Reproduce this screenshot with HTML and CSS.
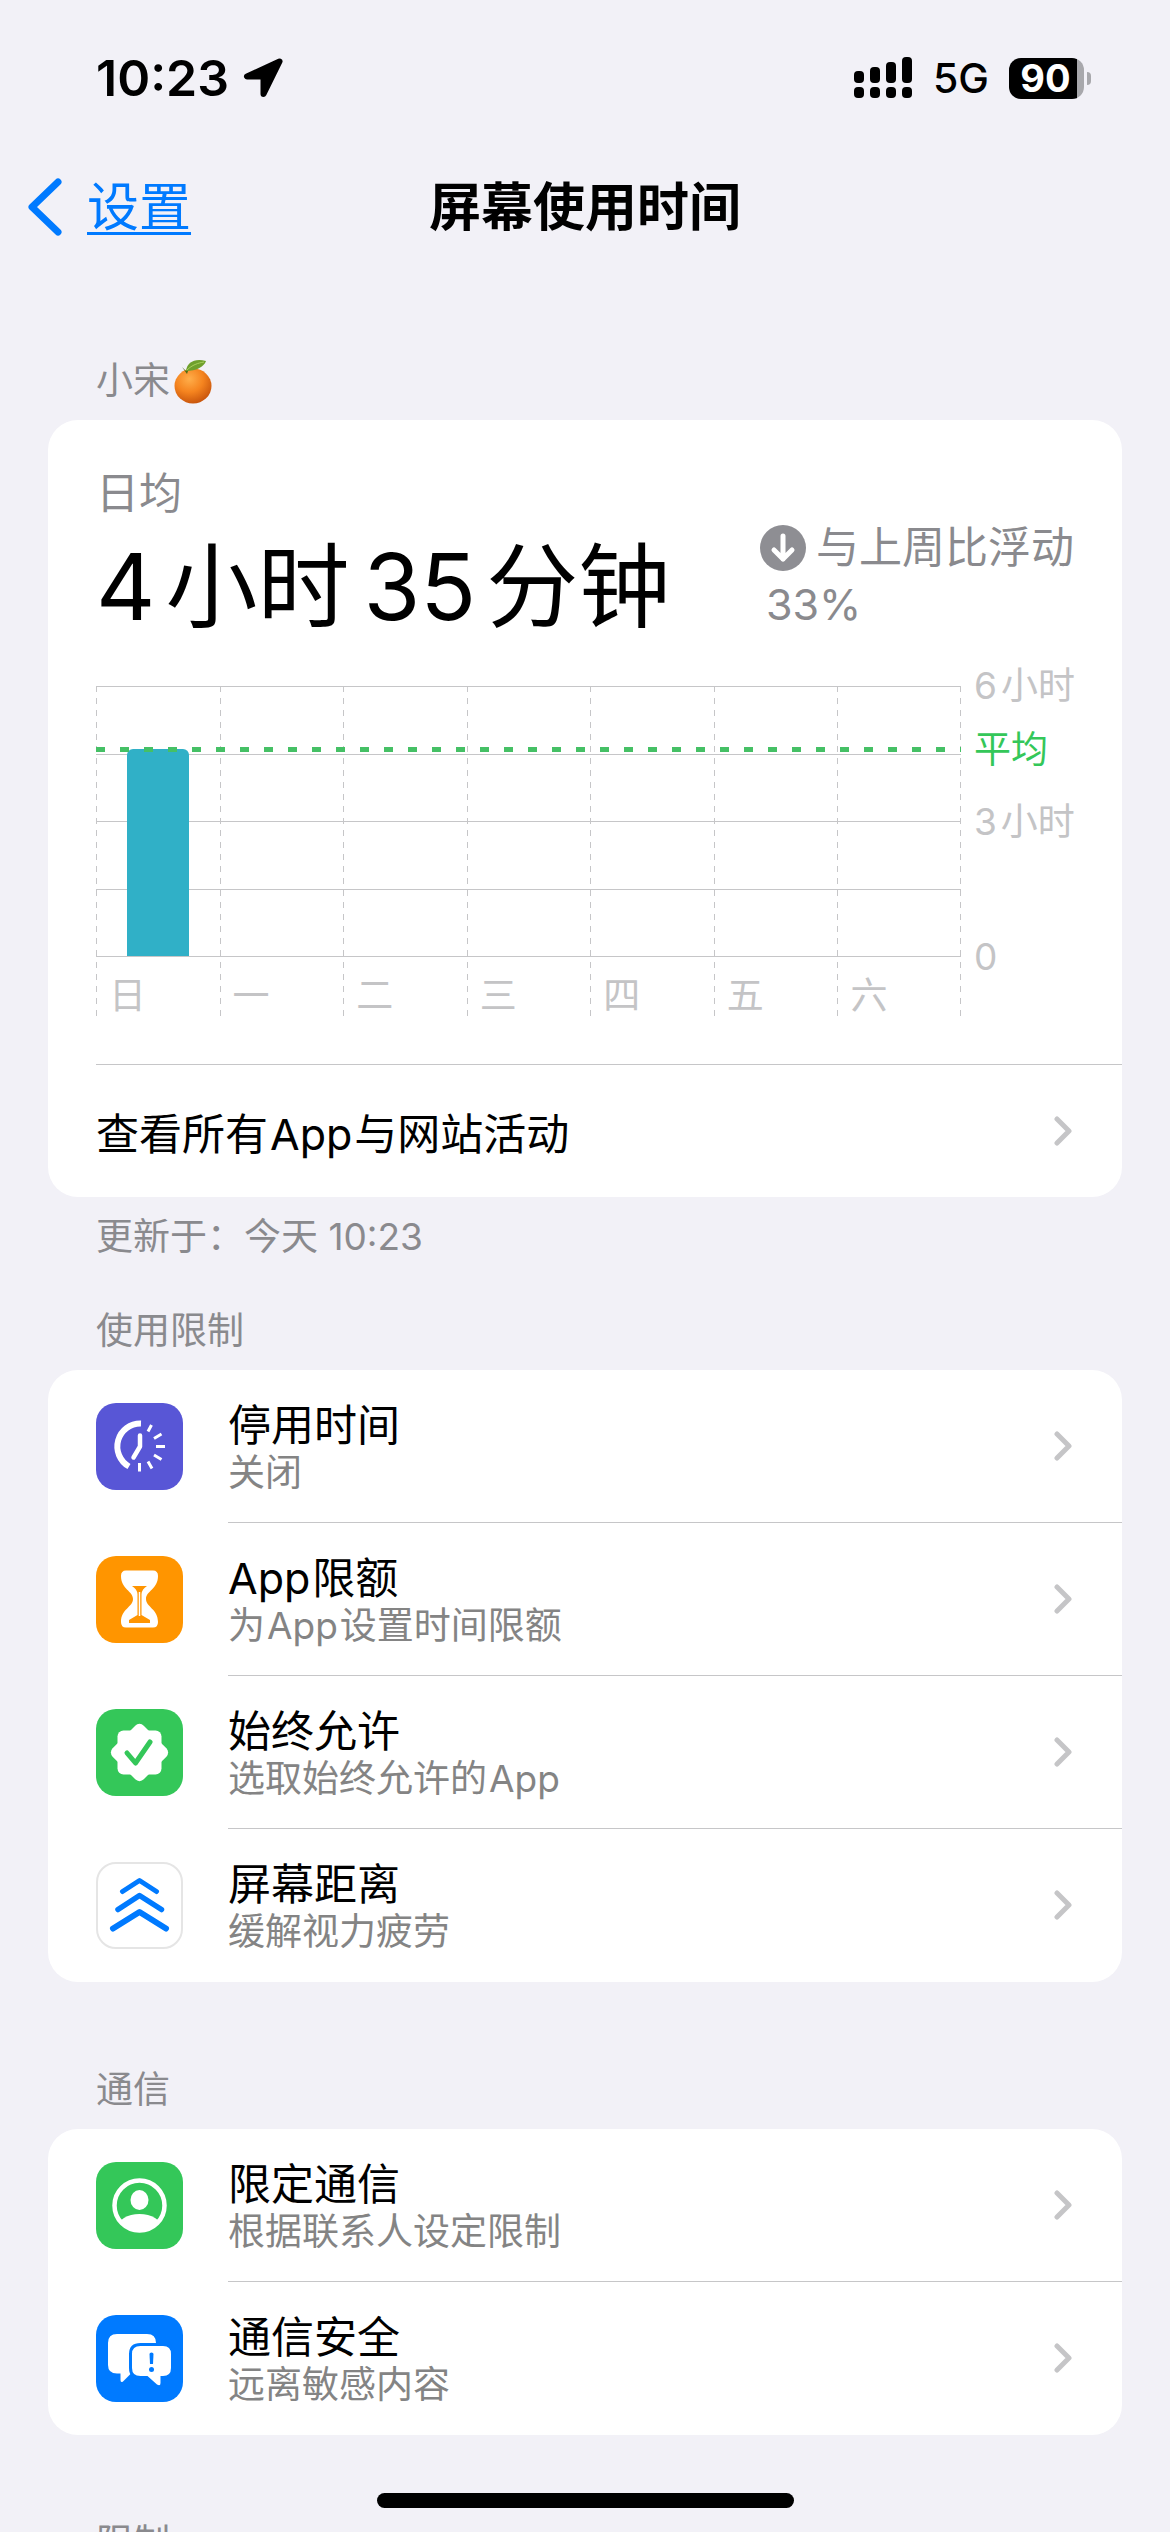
FILE: index.html
```html
<!DOCTYPE html>
<html lang="zh-CN">
<head>
<meta charset="utf-8">
<meta name="viewport" content="width=device-width">
<title>屏幕使用时间</title>
<link rel="stylesheet" href="styles.css">
</head>
<body>
<svg class="defs" aria-hidden="true">
  <symbol id="chevron" viewBox="0 0 20 30">
    <path d="M4 3 L16 15 L4 27" fill="none" stroke="currentColor" stroke-width="5" stroke-linecap="round" stroke-linejoin="round"/>
  </symbol>
</svg>
<div class="screen">
  <div class="status">
    <div class="status-group">
      <span class="clock">10:23</span>
      <svg class="location" viewBox="0 0 40 40" aria-hidden="true">
        <path d="M36.500 3.500 L4 18.500 H20.500 V36 Z" fill="#000" stroke="#000" stroke-width="6" stroke-linejoin="round"/>
      </svg>
    </div>
    <div class="status-group status-right">
      <svg class="signal" viewBox="0 0 60 42" aria-hidden="true">
        <rect x="1" y="14" width="10" height="12" rx="4"/>
        <rect x="17" y="10" width="10" height="16" rx="4"/>
        <rect x="33" y="5" width="10" height="21" rx="4"/>
        <rect x="49" y="0" width="10" height="26" rx="4"/>
        <rect x="1" y="30" width="10" height="11" rx="4"/>
        <rect x="17" y="30" width="10" height="11" rx="4"/>
        <rect x="33" y="30" width="10" height="11" rx="4"/>
        <rect x="49" y="30" width="10" height="11" rx="4"/>
      </svg>
      <span class="network">5G</span>
      <span class="battery"><span class="battery-body">90</span><span class="battery-cap"></span></span>
    </div>
  </div>

  <header class="nav">
    <a class="back" href="#">
      <svg viewBox="0 0 34 58" aria-hidden="true"><path d="M30 4 L4 29 L30 54" fill="none" stroke="currentColor" stroke-width="7" stroke-linecap="round" stroke-linejoin="round"/></svg>
      <span class="back-text">设置</span>
    </a>
    <h1 class="nav-title">屏幕使用时间</h1>
  </header>

  <main class="content">
    <section>
      <h2 class="section-title">小宋
        <svg class="orange" viewBox="0 0 38 45" role="img" aria-label="橘子">
          <defs>
            <radialGradient id="peel" cx="0.400" cy="0.300" r="0.750">
              <stop offset="0" stop-color="#ffae4a"/><stop offset="0.500" stop-color="#f5841f"/><stop offset="1" stop-color="#c4500a"/>
            </radialGradient>
          </defs>
          <ellipse cx="19" cy="27" rx="18.500" ry="17.500" fill="url(#peel)"/>
          <path d="M8 8 l4 4 l3 -3 l-2 6 z" fill="#4c6b16"/>
          <path d="M12 12 C13 3 21 -1 32 2 C30 8 22 12 12 12 Z" fill="#6fa02c"/>
          <path d="M13 11 C18 6 24 4 30 3" fill="none" stroke="#a9cf5e" stroke-width="1"/>
        </svg>
      </h2>
      <div class="card">
        <div class="summary">
          <div>
            <div class="caption">日均</div>
            <div class="total">4<span class="unit">小时</span>35<span class="unit">分钟</span></div>
          </div>
          <div class="trend">
            <div class="trend-line">
              <svg class="down" viewBox="0 0 46 46" aria-hidden="true">
                <circle cx="23" cy="23" r="23" fill="#8e8e93"/>
                <path d="M23 11 V34 M14 25 L23 34 L32 25" fill="none" stroke="#fff" stroke-width="5" stroke-linecap="round" stroke-linejoin="round"/>
              </svg>
              <span>与上周比浮动</span>
            </div>
            <div class="trend-value">33%</div>
          </div>
        </div>

        <div class="chart">
          <div class="plot">
            <div class="rules"><i></i><i></i><i></i><i></i></div>
            <div class="days">
              <div class="day"><div class="slot"><div class="bar" style="height:76.5%"></div></div><span>日</span></div>
              <div class="day"><div class="slot"></div><span>一</span></div>
              <div class="day"><div class="slot"></div><span>二</span></div>
              <div class="day"><div class="slot"></div><span>三</span></div>
              <div class="day"><div class="slot"></div><span>四</span></div>
              <div class="day"><div class="slot"></div><span>五</span></div>
              <div class="day"><div class="slot"></div><span>六</span></div>
            </div>
            <div class="average" style="bottom:76.5%"></div>
          </div>
          <div class="axis">
            <span class="tick" style="bottom:100%">6<span class="unit-small">小时</span></span>
            <span class="tick tick-average" style="bottom:76.5%">平均</span>
            <span class="tick" style="bottom:50%">3<span class="unit-small">小时</span></span>
            <span class="tick" style="bottom:0%">0</span>
          </div>
        </div>

        <a class="all" href="#">
          <span>查看所有<span class="latin">App</span>与网站活动</span>
          <svg class="chevron" aria-hidden="true"><use href="#chevron"/></svg>
        </a>
      </div>
      <p class="note">更新于：今天 10:23</p>
    </section>

    <section>
      <h2 class="section-title section-title-near">使用限制</h2>
      <div class="card">
        <a class="row" href="#">
          <svg class="icon" viewBox="0 0 87 87" aria-hidden="true">
            <rect width="87" height="87" rx="20" fill="#5856d6"/>
            <g fill="none" stroke="#fff">
              <path d="M45 20.500 A23 23 0 0 0 33 63.500" stroke-width="6"/>
              <path d="M44 32.500 V43.500 L37.500 54.500" stroke-width="4.500" stroke-linecap="round" stroke-linejoin="round"/>
              <path d="M55.500 22 L52 28.500 M65.500 31 L58 35.500 M60 43.500 H69 M58 52 L65.500 56.500 M52 58.500 L56 65.500 M43.500 60 V68.500" stroke-width="3"/>
            </g>
          </svg>
          <span class="row-body"><span class="row-text"><span class="row-title">停用时间</span><span class="row-sub">关闭</span></span>
          <svg class="chevron" aria-hidden="true"><use href="#chevron"/></svg></span>
        </a>
        <a class="row" href="#">
          <svg class="icon" viewBox="0 0 87 87" aria-hidden="true">
            <rect width="87" height="87" rx="20" fill="#ff9500"/>
            <path d="M30 14.500 H57 Q62 14.500 62 20 C62 33 50 35 50 43 C50 51 62 53 62 66 Q62 71.500 57 71.500 H30 Q25 71.500 25 66 C25 53 37 51 37 43 C37 35 25 33 25 20 Q25 14.500 30 14.500 Z" fill="#fff"/>
            <path d="M36 30 H51 Q46 33 45.500 38 V59 L54 64 V67 H33 V64 L41.500 59 V38 Q41 33 36 30 Z" fill="#ff9500"/>
            <path d="M43.500 36 V60" stroke="#fff" stroke-width="1.500"/>
          </svg>
          <span class="row-body"><span class="row-text"><span class="row-title"><span class="latin-start">App</span>限额</span><span class="row-sub">为<span class="latin">App</span>设置时间限额</span></span>
          <svg class="chevron" aria-hidden="true"><use href="#chevron"/></svg></span>
        </a>
        <a class="row" href="#">
          <svg class="icon" viewBox="0 0 87 87" aria-hidden="true">
            <rect width="87" height="87" rx="20" fill="#34c759"/>
            <rect x="21.500" y="21.500" width="44" height="44" rx="6" fill="#fff"/>
            <rect x="21.500" y="21.500" width="44" height="44" rx="6" fill="#fff" transform="rotate(45 43.500 43.500)"/>
            <path d="M31 44 L39.500 54 L54 33" fill="none" stroke="#34c759" stroke-width="5" stroke-linecap="round" stroke-linejoin="round"/>
          </svg>
          <span class="row-body"><span class="row-text"><span class="row-title">始终允许</span><span class="row-sub">选取始终允许的<span class="latin-end">App</span></span></span>
          <svg class="chevron" aria-hidden="true"><use href="#chevron"/></svg></span>
        </a>
        <a class="row" href="#">
          <svg class="icon" viewBox="0 0 87 87" aria-hidden="true">
            <rect x="1" y="1" width="85" height="85" rx="19" fill="#fff" stroke="#e5e5e5" stroke-width="2"/>
            <g fill="none" stroke="#007aff" stroke-linecap="round" stroke-linejoin="round">
              <path d="M26.500 29.500 L43.500 18.500 L60.500 29.500" stroke-width="5"/>
              <path d="M22 47.500 L43.500 33.500 L65.500 47.500" stroke-width="5.500"/>
              <path d="M17 66.500 L43.500 50 L70 66.500" stroke-width="6"/>
            </g>
          </svg>
          <span class="row-body"><span class="row-text"><span class="row-title">屏幕距离</span><span class="row-sub">缓解视力疲劳</span></span>
          <svg class="chevron" aria-hidden="true"><use href="#chevron"/></svg></span>
        </a>
      </div>
    </section>

    <section>
      <h2 class="section-title">通信</h2>
      <div class="card">
        <a class="row" href="#">
          <svg class="icon" viewBox="0 0 87 87" aria-hidden="true">
            <clipPath id="face"><circle cx="43.500" cy="43.500" r="25"/></clipPath>
            <rect width="87" height="87" rx="20" fill="#34c759"/>
            <circle cx="43.500" cy="43.500" r="25" fill="none" stroke="#fff" stroke-width="4.500"/>
            <ellipse cx="43.500" cy="38" rx="9" ry="10" fill="#fff"/>
            <ellipse cx="43.500" cy="66" rx="22" ry="14" fill="#fff" clip-path="url(#face)"/>
          </svg>
          <span class="row-body"><span class="row-text"><span class="row-title">限定通信</span><span class="row-sub">根据联系人设定限制</span></span>
          <svg class="chevron" aria-hidden="true"><use href="#chevron"/></svg></span>
        </a>
        <a class="row" href="#">
          <svg class="icon" viewBox="0 0 87 87" aria-hidden="true">
            <rect width="87" height="87" rx="20" fill="#007aff"/>
            <path d="M21 19 H51 Q60 19 60 28 V50 Q60 58.500 51 58.500 H35 L27 66.500 Q24.500 68 24.500 65 V58.500 H21 Q12 58.500 12 50 V28 Q12 19 21 19 Z" fill="#fff"/>
            <path d="M44.500 31 H67 Q75 31 75 39 V53 Q75 61 67 61 H64.500 V68 Q64.500 71.500 61 69.500 L51.500 61 H44.500 Q36 61 36 53 V39 Q36 31 44.500 31 Z" fill="#fff" stroke="#007aff" stroke-width="6" paint-order="stroke"/>
            <path d="M53.500 39 Q53.500 37.500 55.500 37.500 Q57.500 37.500 57.500 39 L57 49 H54 Z" fill="#007aff"/>
            <circle cx="55.500" cy="54.500" r="2.500" fill="#007aff"/>
          </svg>
          <span class="row-body"><span class="row-text"><span class="row-title">通信安全</span><span class="row-sub">远离敏感内容</span></span>
          <svg class="chevron" aria-hidden="true"><use href="#chevron"/></svg></span>
        </a>
      </div>
    </section>

    <section>
      <h2 class="section-title">限制</h2>
    </section>
  </main>
  <div class="home-indicator"></div>
</div>
</body>
</html>
```
FILE: styles.css
```css
:root {
  --background: #f2f1f7;
  --secondary: #8a8a8e;
  --tertiary: #c4c4c6;
  --line: #c6c6c8;
  --blue: #007aff;
}

* { box-sizing: border-box; }

body {
  margin: 0;
  background: var(--background);
  color: #000;
  font-family: Inter, "Noto Sans CJK SC", sans-serif;
  font-size: 43px;
}

a { color: inherit; text-decoration: none; }
svg { display: block; flex: none; }
h1, h2, p { margin: 0; font-weight: 400; }

.defs { position: absolute; width: 0; height: 0; }

.screen {
  display: flex;
  flex-direction: column;
  height: 100vh;
  overflow: hidden;
}

/* status bar */
.status {
  flex: none;
  display: flex;
  justify-content: space-between;
  align-items: center;
  height: 141px;
  padding: 15px 79px 0 96px;
}
.status-group { display: flex; align-items: center; gap: 14px; }
.status-right { gap: 20px; }
.clock { font-size: 50px; font-weight: 600; }
.location { width: 40px; height: 40px; }
.signal { width: 60px; height: 42px; }
.network { font-size: 41px; font-weight: 500; }
.battery { display: flex; align-items: center; gap: 3px; }
.battery-body {
  width: 75px;
  height: 41px;
  border-radius: 12px;
  background: linear-gradient(90deg, #000 68px, #a8a8ac 68px);
  color: #fff;
  font-size: 38px;
  font-weight: 700;
  line-height: 41px;
  padding-right: 2px;
  text-align: center;
}
.battery-cap { width: 4px; height: 13px; border-radius: 0 4px 4px 0; background: #a8a8ac; }

/* navigation bar */
.nav {
  flex: none;
  display: grid;
  grid-template-columns: 1fr auto 1fr;
  align-items: center;
  height: 132px;
  padding: 0 28px;
  font-size: 52px;
  line-height: 64px;
}
.back { display: flex; align-items: center; gap: 25px; color: var(--blue); }
.back svg { width: 34px; height: 58px; }
.back-text { padding-top: 2px; text-decoration: underline; text-decoration-thickness: 3px; text-underline-offset: 6px; }
.nav-title { padding-top: 2px; font-size: 52px; font-weight: 600; }

/* grouped list */
.content { flex: 1; min-height: 0; overflow-y: auto; scrollbar-width: none; padding: 0 48px; }

.section-title {
  display: flex;
  align-items: center;
  gap: 4px;
  padding: 84px 48px 15px;
  color: var(--secondary);
  font-size: 37px;
  line-height: 48px;
}
.section-title-near { padding-top: 46px; }
.orange { width: 38px; height: 45px; }
.card { overflow: hidden; border-radius: 30px; background: #fff; }
.note { padding: 16px 48px 0; color: var(--secondary); font-size: 37px; line-height: 48px; }
.chevron { width: 20px; height: 30px; color: #c5c5c7; }

.latin { margin: 0 2px; }
.latin-start { margin-right: 2px; }
.latin-end { margin-left: 2px; }

/* daily average */
.summary {
  display: flex;
  justify-content: space-between;
  align-items: flex-end;
  padding: 45px 48px 0;
}
.caption { color: var(--secondary); line-height: 57px; }
.total { font-size: 92px; line-height: 130px; }
.unit { margin: 0 14px 0 10px; }
.trend { margin-bottom: 19px; color: var(--secondary); line-height: 57px; }
.trend-line { display: flex; align-items: center; gap: 10px; }
.trend-value { padding-left: 6px; }
.down { width: 46px; height: 46px; }

/* weekly chart */
.chart { display: flex; padding: 34px 0 47px 48px; color: var(--tertiary); font-size: 37px; }
.plot { position: relative; flex: 1; height: 271px; margin-bottom: 60px; }
.rules {
  position: absolute;
  inset: 0;
  display: flex;
  flex-direction: column;
  border-bottom: 1px solid var(--line);
}
.rules i { flex: 1; border-top: 1px solid var(--line); }
.days {
  position: absolute;
  inset: 0 0 -60px;
  display: grid;
  grid-template-columns: repeat(7, 1fr);
  background: repeating-linear-gradient(var(--line) 0 6px, transparent 6px 12px) right / 1px 100% no-repeat;
}
.day {
  background: repeating-linear-gradient(var(--line) 0 6px, transparent 6px 12px) left / 1px 100% no-repeat;
}
.slot { display: flex; align-items: flex-end; justify-content: center; height: 270px; }
.bar { width: 50%; border-radius: 6px 6px 0 0; background: #30b0c7; }
.day span { display: block; padding: 16px 0 0 13px; line-height: 48px; }
.average {
  position: absolute;
  left: 0;
  right: 0;
  height: 5px;
  margin-bottom: -2px;
  background: repeating-linear-gradient(90deg, #45c065 0 9px, transparent 9px 24px);
}
.axis { position: relative; width: 161px; height: 271px; }
.tick { position: absolute; left: 13px; margin-bottom: -24px; line-height: 48px; white-space: nowrap; }
.tick-average { color: #34c759; }
.unit-small { margin-left: 4px; }

.all {
  display: flex;
  justify-content: space-between;
  align-items: center;
  height: 133px;
  margin-left: 48px;
  padding-right: 49px;
  border-top: 1px solid var(--line);
}

/* settings rows */
.row { display: flex; align-items: center; gap: 45px; padding-left: 48px; }
.icon { width: 87px; height: 87px; }
.row-body {
  flex: 1;
  display: flex;
  justify-content: space-between;
  align-items: center;
  height: 153px;
  padding-right: 49px;
  border-bottom: 1px solid var(--line);
}
.row:last-child .row-body { border-bottom-color: transparent; }
.row-text { display: flex; flex-direction: column; padding-top: 6px; }
.row-title { line-height: 48px; }
.row-sub { color: #848484; font-size: 37px; line-height: 48px; }

.home-indicator {
  position: fixed;
  left: 50%;
  bottom: 24px;
  width: 417px;
  height: 15px;
  margin-left: -208px;
  border-radius: 8px;
  background: #000;
}
```
